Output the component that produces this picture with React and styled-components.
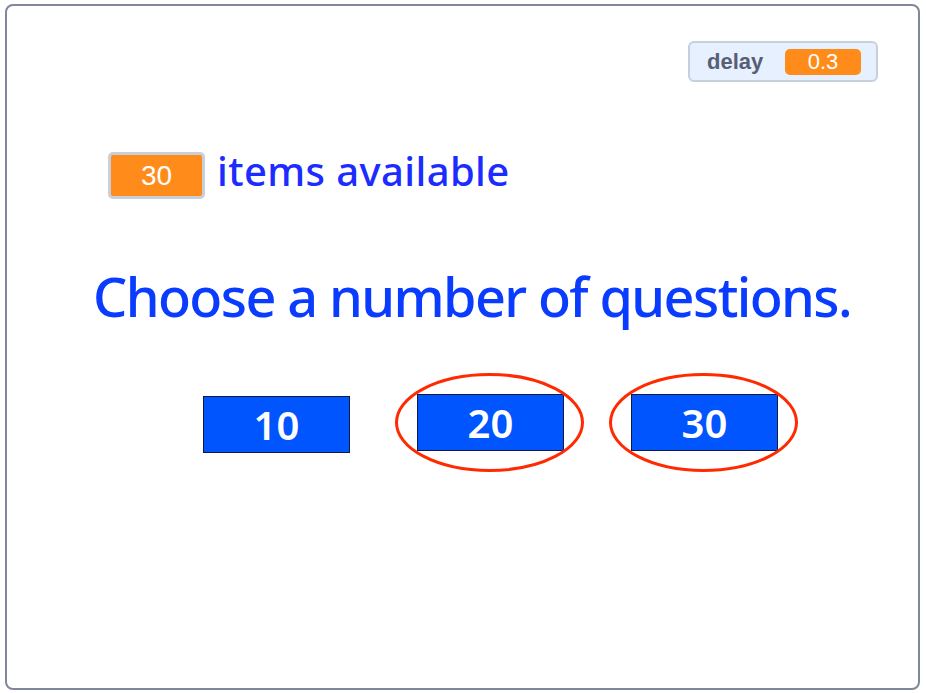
import React from 'react'
import styled, { createGlobalStyle } from 'styled-components'

const GlobalStyle = createGlobalStyle`
html, body {
  margin:0;
  padding:0;
  background:#ffffff;
}
body {
  font-family:"Noto Sans", "Open Sans", sans-serif;
}
`

const Stage = styled.div`
box-sizing:border-box;
width:915px;
height:686px;
margin:4px 0 0 5px;
border:2px solid #80879a;
border-radius:8px;
display:flex;
flex-direction:column;
overflow:hidden;
`

const TopBar = styled.div`
display:flex;
justify-content:flex-end;
padding:35px 40px 0 0;
`

const Monitor = styled.div`
box-sizing:border-box;
width:190px;
height:41px;
display:flex;
align-items:center;
justify-content:space-between;
padding:0 15px 0 17px;
background:#e6f0ff;
border:2px solid #c6cfdc;
border-radius:6px;
`

const MonitorLabel = styled.span`
font-family:"Liberation Sans", Arial, sans-serif;
font-weight:700;
font-size:22px;
color:#575e75;
`

const MonitorValue = styled.span`
width:76px;
height:26px;
display:flex;
align-items:center;
justify-content:center;
background:#ff8c1a;
border-radius:5px;
color:#ffffff;
font-family:"Liberation Sans", Arial, sans-serif;
font-size:22px;
`

const ItemsRow = styled.div`
display:flex;
align-items:flex-start;
margin-top:70px;
padding-left:101px;
`

const Readout = styled.div`
box-sizing:border-box;
width:97px;
height:47px;
display:flex;
align-items:center;
justify-content:center;
background:#ff8c1a;
border:3px solid #c8cfdb;
border-radius:5px;
color:#ffffff;
font-family:"Liberation Sans", Arial, sans-serif;
font-size:28px;
`

const ItemsLabel = styled.span`
margin:-1px 0 0 12px;
font-size:40px;
font-weight:500;
letter-spacing:0.4px;
line-height:1;
color:#1c2cff;
`

const Heading = styled.h1`
margin:70px 0 0 86px;
font-size:54px;
font-weight:500;
letter-spacing:-1.6px;
line-height:1;
color:#0a3cff;
white-space:nowrap;
`

const Choices = styled.div`
display:flex;
align-items:flex-start;
gap:67px;
margin-top:71px;
padding-left:196px;
`

const Choice = styled.div`
position:relative;
margin-top:${p => p.$drop || 0}px;
`

const ChoiceButton = styled.div`
box-sizing:border-box;
width:147px;
height:57px;
display:flex;
align-items:center;
justify-content:center;
background:#0055ff;
border:1px solid #0d1b45;
color:#ffffff;
font-size:40px;
font-weight:600;
line-height:1;
`

const Ring = styled.svg`
position:absolute;
left:-22px;
top:-21px;
width:189px;
height:99px;
pointer-events:none;
overflow:visible;
`

const options = [
  { value: '10', drop: 2, circled: false },
  { value: '20', drop: 0, circled: true },
  { value: '30', drop: 0, circled: true },
]

const App = () => {
  return (
    <>
      <GlobalStyle />
      <Stage>
        <TopBar>
          <Monitor>
            <MonitorLabel>delay</MonitorLabel>
            <MonitorValue>0.3</MonitorValue>
          </Monitor>
        </TopBar>

        <ItemsRow>
          <Readout>30</Readout>
          <ItemsLabel>items available</ItemsLabel>
        </ItemsRow>

        <Heading>Choose a number of questions.</Heading>

        <Choices>
          {options.map(o => (
            <Choice key={o.value} $drop={o.drop}>
              <ChoiceButton>{o.value}</ChoiceButton>
              {o.circled && (
                <Ring viewBox="0 0 189 99">
                  <ellipse cx="94.5" cy="49.5" rx="93" ry="48" fill="none" stroke="#ff2a00" strokeWidth="3" />
                </Ring>
              )}
            </Choice>
          ))}
        </Choices>
      </Stage>
    </>
  )
}

export default App
